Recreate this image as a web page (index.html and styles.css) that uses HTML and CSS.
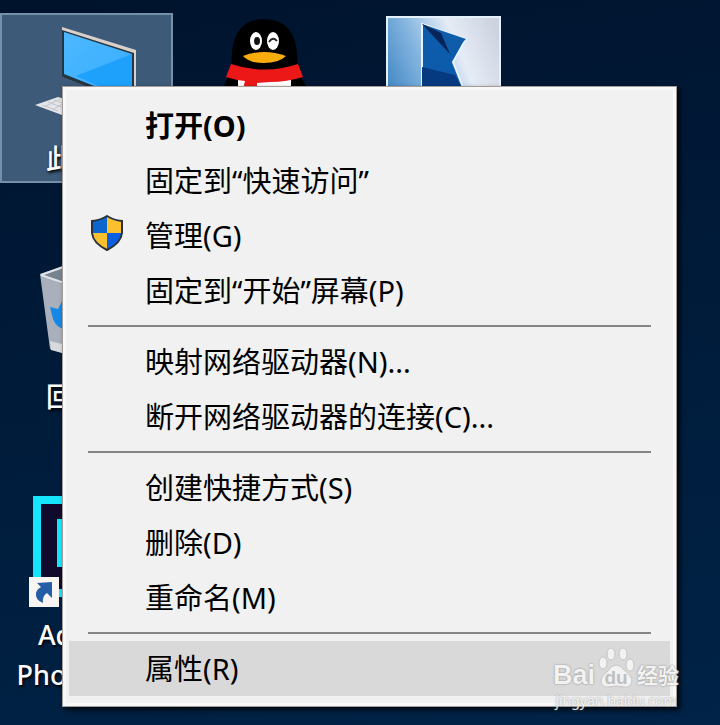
FILE: index.html
```
<!DOCTYPE html>
<html lang="zh-CN">
<head>
  <meta charset="UTF-8">
  <title>桌面</title>
  <meta name="viewport" content="width=device-width, initial-scale=1.0">
  <link rel="stylesheet" href="styles.css">
</head>
<body>

<div class="desktop">

  <div class="icons">
    <div class="icon selected">
      <svg width="173" height="126" viewBox="0 0 173 126">
        <defs>
          <linearGradient id="screen" x1="0" y1="0" x2="1" y2="1">
            <stop offset="0" stop-color="#4db8ff"/>
            <stop offset="1" stop-color="#36adff"/>
          </linearGradient>
        </defs>
        <polygon points="62,14 136,37 136,92 62,64" fill="#d9d0cb"/>
        <polygon points="62,17 134,40 134,92 62,64" fill="#263542"/>
        <polygon points="64,19 132,41 132,88 64,61" fill="url(#screen)"/>
        <polygon points="132,41 132,88 76,63" fill="#1da1fb"/>
        <polygon points="35,92 58,84 84,92 62,102" fill="#e3e5e8"/>
        <path d="M42 92l16 6M48 89l16 6M54 87l14 5M44 94l16-8M52 97l14-8" stroke="#c3c6ca" fill="none"/>
      </svg>
      <span class="label">此电脑</span>
    </div>

    <div class="icon">
      <svg width="173" height="126" viewBox="0 0 173 126">
        <path d="M44 76Q48 64 53 58Q49 6 85 6Q122 6 118 58Q124 66 128 76Z" fill="#000"/>
        <rect x="59" y="65" width="53" height="12" fill="#fff"/>
        <path d="M52 51Q85 62 119 51L124 64Q108 69 91 69L78 70L78 76L64 76L66 68Q56 67 47 64Z" fill="#ec1717"/>
        <ellipse cx="77" cy="28" rx="6" ry="9" fill="#fff"/>
        <ellipse cx="94" cy="28" rx="6" ry="9" fill="#fff"/>
        <ellipse cx="78" cy="28" rx="3" ry="4" fill="#111"/>
        <path d="M90 29Q94 23 98 28" stroke="#222" stroke-width="2" fill="none"/>
        <path d="M64 43Q85 35 107 43Q100 50 85 50Q70 50 64 43Z" fill="#f9ad0d"/>
      </svg>
    </div>

    <div class="icon">
      <svg width="173" height="126" viewBox="0 0 173 126">
        <defs>
          <linearGradient id="tile" x1="0" y1="0.6" x2="1" y2="0.2">
            <stop offset="0" stop-color="#4389c6"/>
            <stop offset="0.35" stop-color="#8ab8e0"/>
            <stop offset="0.65" stop-color="#e6ecf6"/>
            <stop offset="1" stop-color="#ccd3df"/>
          </linearGradient>
        </defs>
        <rect x="28" y="3" width="115" height="110" fill="url(#tile)"/>
        <path d="M29 113V4H142V113" stroke="#e4f1fb" stroke-width="2" fill="none"/>
        <polygon points="64,11 108,26 95,49 108,82 64,82" fill="#0d5cab" stroke="#e9f3fc" stroke-width="2"/>
        <polygon points="64,11 108,26 92,41" fill="#0f5da8"/>
        <polygon points="64,11 83,20 92,41" fill="#07245a"/>
        <polygon points="64,54 97,62 108,82 64,82" fill="#063a80"/>
      </svg>
    </div>

    <div class="icon bin">
      <svg width="173" height="126" viewBox="0 0 173 126">
        <polygon points="40,23 64,15 130,24 120,104 62,102 50,98" fill="#a9afbb"/>
        <polygon points="43,24 64,17 120,26 64,34" fill="#77838f"/>
        <path d="M41 24L63 16M41 24L64 32" stroke="#dfe3e8" stroke-width="2" fill="none"/>
        <polygon points="50,90 66,94 66,103 51,99" fill="#d8dade"/>
        <path d="M50 56L58 58L64 46V78Q56 76 53 68Z" fill="#1688e8"/>
      </svg>
      <span class="label">回收站</span>
    </div>

    <div class="icon shortcut">
      <svg width="173" height="126" viewBox="0 0 173 126">
        <rect x="37" y="11" width="98" height="93" fill="#100a2c" stroke="#16e6fb" stroke-width="8"/>
        <rect x="57" y="30" width="8" height="48" fill="#16e6fb"/>
        <rect x="29" y="88" width="30" height="30" fill="#f8f5f3"/>
        <path d="M37 94L52 93V109L47 104Q42 107 43 114Q35 111 36 104Q37 100 41 98Z" fill="#255da6"/>
      </svg>
      <span class="label">Adobe&nbsp;&nbsp;<br>Photoshop</span>
    </div>
  </div>

  <div class="context-menu">
    <button class="menu-item default">打开(O)</button>
    <button class="menu-item">固定到“快速访问”</button>
    <button class="menu-item">
      <svg class="shield" width="34" height="38" viewBox="0 0 34 38">
        <defs>
          <clipPath id="shield-clip">
            <path d="M17 2Q23 6 32 7V19Q31 29 17 36Q3 29 2 19V7Q11 6 17 2Z"/>
          </clipPath>
        </defs>
        <g clip-path="url(#shield-clip)">
          <rect width="17" height="19" fill="#0b66d0"/>
          <rect x="17" width="17" height="19" fill="#fbc02d"/>
          <rect y="19" width="17" height="19" fill="#fbc02d"/>
          <rect x="17" y="19" width="17" height="19" fill="#0b5fe0"/>
        </g>
        <path d="M17 2Q23 6 32 7V19Q31 29 17 36Q3 29 2 19V7Q11 6 17 2Z" fill="none" stroke="#2b323b" stroke-width="2"/>
      </svg>
      管理(G)
    </button>
    <button class="menu-item">固定到“开始”屏幕(P)</button>
    <hr>
    <button class="menu-item">映射网络驱动器(N)...</button>
    <button class="menu-item">断开网络驱动器的连接(C)...</button>
    <hr>
    <button class="menu-item">创建快捷方式(S)</button>
    <button class="menu-item">删除(D)</button>
    <button class="menu-item">重命名(M)</button>
    <hr>
    <button class="menu-item active">属性(R)</button>
  </div>

  <div class="watermark">
    <div class="brand">
      <span class="bai">Bai</span>
      <svg width="38" height="42" viewBox="0 0 38 42">
        <g fill="#f5f5f5" stroke="#c4c4c4">
          <ellipse cx="6" cy="17" rx="4" ry="6"/>
          <ellipse cx="14" cy="8" rx="4" ry="6"/>
          <ellipse cx="26" cy="8" rx="4" ry="6"/>
          <ellipse cx="33" cy="19" rx="4" ry="6"/>
          <path d="M19 19Q24 19 27 24Q35 30 35 35Q34 42 27 41Q19 39 12 41Q4 42 4 34Q5 29 11 25Q14 19 19 19Z"/>
        </g>
        <text x="19" y="38" text-anchor="middle" class="du">du</text>
      </svg>
      <span class="jingyan">经验</span>
    </div>
    <div class="site">jingyan.baidu.com</div>
  </div>

</div>

</body>
</html>
```
FILE: styles.css
```
* {
  box-sizing: border-box;
}

body {
  margin: 0;
  font-family: "Noto Sans", "Noto Sans CJK SC", sans-serif;
  background: #001f3f;
}

.desktop {
  position: relative;
  min-height: 100vh;
  overflow: hidden;
  padding-top: 13px;
  background: linear-gradient(170deg, #00132d 0%, #001a38 40%, #002347 100%);
}

/* desktop icons */
.icons {
  display: grid;
  grid-template-columns: repeat(3, 173px);
  grid-auto-rows: 170px;
  gap: 68px 6px;
}

.icon {
  display: flex;
  flex-direction: column;
  align-items: center;
}

.icon svg {
  flex-shrink: 0;
}

.icon.bin,
.icon.shortcut {
  grid-column: 1;
}

.selected {
  background: #3d5a78;
  box-shadow: inset 0 0 0 2px #7590ab;
}

.label {
  color: #fff;
  font-size: 27px;
  font-weight: 500;
  line-height: 40px;
  text-align: center;
  text-shadow: 1px 2px 3px #000;
}

/* right click menu */
.context-menu {
  position: absolute;
  top: 86px;
  left: 62px;
  right: 43px;
  padding: 11px 6px 10px;
  background: #f1f1f1;
  border: 1px solid #a39c98;
  box-shadow: inset 0 0 0 3px #f8f8f8, 3px 3px 5px rgba(0,0,0,0.8);
}

.menu-item {
  position: relative;
  display: block;
  width: 100%;
  height: 55px;
  padding: 0 0 0 76px;
  border: none;
  background: none;
  color: #000;
  font-family: inherit;
  font-size: 29px;
  line-height: 54px;
  text-align: left;
  white-space: nowrap;
}

.menu-item.default {
  font-weight: bold;
}

.menu-item:hover,
.menu-item.active {
  background: #d9d9d9;
}

.shield {
  position: absolute;
  left: 21px;
  top: 6px;
}

hr {
  height: 2px;
  margin: 7px 19px;
  border: none;
  background: #858585;
}

/* watermark */
.watermark {
  position: absolute;
  right: 41px;
  bottom: 16px;
  width: 126px;
  color: #f5f5f5;
  text-shadow: 0 0 2px #777;
  opacity: 0.9;
}

.brand {
  display: flex;
  align-items: flex-end;
  justify-content: space-between;
  height: 42px;
}

.bai {
  font-family: "Liberation Sans", sans-serif;
  font-size: 27px;
  font-weight: bold;
  line-height: 26px;
}

.du {
  font-family: "Liberation Sans", sans-serif;
  font-size: 19px;
  font-weight: bold;
  fill: #bdbdbd;
  text-shadow: none;
}

.jingyan {
  font-size: 21px;
  font-weight: bold;
  line-height: 26px;
}

.site {
  margin-top: 5px;
  font-size: 14px;
  line-height: 16px;
  text-align: center;
}
```
